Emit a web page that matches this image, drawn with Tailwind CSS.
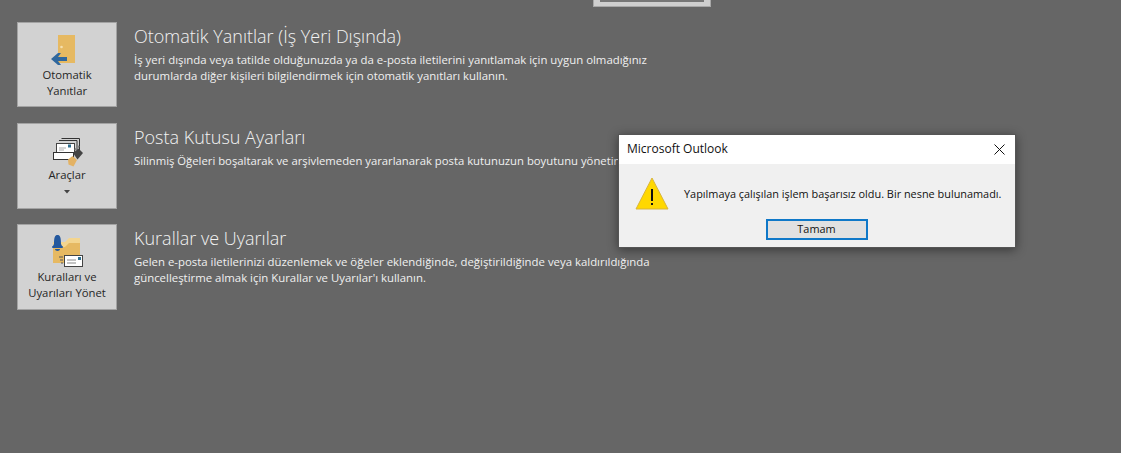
<!DOCTYPE html>
<html><head><meta charset="utf-8"><script src="https://cdn.jsdelivr.net/npm/@tailwindcss/browser@4"></script></head>
<body class="m-0">
<div class="relative w-[1121px] h-[453px] overflow-hidden bg-[#666666] font-['Open_Sans','Noto_Sans',sans-serif]">
  <div class="absolute left-[593px] top-0 w-[118px] h-[7px] bg-[#cfcfcf] border-x border-b border-[#a8a8a8] flex justify-center"><div class="w-[104px] h-[2px] bg-[#777777]"></div></div>

  <div class="flex flex-col pl-[17px] pt-[22px]">
    <div class="flex gap-[17px] mb-[16px]">
      <div class="w-[100px] h-[85px] bg-[#d2d2d2] border border-[#a3a3a3] flex flex-col items-center pt-[12px] text-[11.3px] leading-[16px] text-[#262626] text-center shrink-0">
        <svg width="34" height="30" viewBox="0 0 34 30" class="shrink-0"><rect x="8" y="0" width="17" height="28" fill="#e6b962"/><circle cx="11.500" cy="12" r="1.300" fill="#f5dfaf"/><path d="M1 24 L8 18 H11 L8 22 H17 V26 H8 L11 30 H8 Z" fill="#2f679e"/></svg>
        <span class="mt-[2px]">Otomatik<br>Yanıtlar</span>
      </div>
      <div class="w-[540px] text-[#f3f3f3] pt-[1px]">
        <div class="text-[18px] leading-[26px] font-light whitespace-nowrap">Otomatik Yanıtlar (İş Yeri Dışında)</div>
        <div class="text-[11.4px] leading-[16px] mt-[3px] text-[#f0f0f0] whitespace-nowrap">İş yeri dışında veya tatilde olduğunuzda ya da e-posta iletilerini yanıtlamak için uygun olmadığınız<br>durumlarda diğer kişileri bilgilendirmek için otomatik yanıtları kullanın.</div>
      </div>
    </div>

    <div class="flex gap-[17px] mb-[15px]">
      <div class="w-[100px] h-[86px] bg-[#d2d2d2] border border-[#a3a3a3] flex flex-col items-center pt-[12px] text-[11.3px] leading-[16px] text-[#262626] text-center shrink-0">
        <svg width="34" height="31" viewBox="0 0 34 31" class="shrink-0">
          <path d="M11.500 2.500H29.500V14M9 4.500H27V14" fill="none" stroke="#333" stroke-width="1"/>
          <rect x="6.500" y="7.500" width="18" height="10" fill="#fff" stroke="#444"/>
          <rect x="18" y="8.500" width="3" height="3" fill="#2f6f8f"/><path d="M9 12H16M9 14H14" stroke="#aaa"/>
          <rect x="3.500" y="16.500" width="20" height="7" fill="#fff" stroke="#333"/>
          <path d="M25 14 L29 10" stroke="#888" stroke-width="2"/>
          <path d="M23 17 L28.500 12.500 L33 17 L27.500 23.500 Z" fill="#444"/>
          <path d="M22.500 20 L27 24 L23.500 30.500 L18.500 28.500 L18 23.500 Z" fill="#e3b264"/>
        </svg>
        <span>Araçlar</span>
        <svg width="6" height="4" viewBox="0 0 6 4" class="mt-[7px]"><path d="M0 0H6L3 3.500Z" fill="#444"/></svg>
      </div>
      <div class="w-[540px] text-[#f3f3f3] pt-[1px]">
        <div class="text-[18px] leading-[26px] font-light whitespace-nowrap">Posta Kutusu Ayarları</div>
        <div class="text-[11.3px] leading-[16px] mt-[3px] text-[#f0f0f0] whitespace-nowrap">Silinmiş Öğeleri boşaltarak ve arşivlemeden yararlanarak posta kutunuzun boyutunu yönetin.</div>
      </div>
    </div>

    <div class="flex gap-[17px]">
      <div class="w-[100px] h-[86px] bg-[#d2d2d2] border border-[#a3a3a3] flex flex-col items-center pt-[9px] text-[11.3px] leading-[16px] text-[#262626] text-center shrink-0">
        <svg width="34" height="34" viewBox="0 0 34 34" class="shrink-0">
          <path d="M3 8H15L19 4H30V29H3Z" fill="#f3d58f"/><path d="M3 13H15L19 9H30V29H3Z" fill="#e6b962"/>
          <path d="M4 10 C4 3 5 1 7.500 1 C10 1 11 3 11 10 L12 12 H3 Z" fill="#23589e"/><rect x="2" y="12" width="11" height="2" rx="1" fill="#23589e"/><path d="M5 15H10C10 17.500 5 17.500 5 15Z" fill="#23589e"/>
          <rect x="14.500" y="21.500" width="18" height="11" fill="#fff" stroke="#444"/>
          <rect x="28" y="23" width="3" height="3" fill="#2f6f8f"/><path d="M17 26H26M17 29H26" stroke="#888"/>
          <path d="M9 23H13M10 26H13M11 29H13" stroke="#555"/>
        </svg>
        <span class="mt-[1px]">Kuralları ve<br>Uyarıları Yönet</span>
      </div>
      <div class="w-[540px] text-[#f3f3f3] pt-[1px]">
        <div class="text-[18px] leading-[26px] font-light whitespace-nowrap">Kurallar ve Uyarılar</div>
        <div class="text-[11.4px] leading-[16px] mt-[3px] text-[#f0f0f0] whitespace-nowrap">Gelen e-posta iletilerinizi düzenlemek ve öğeler eklendiğinde, değiştirildiğinde veya kaldırıldığında<br>güncelleştirme almak için Kurallar ve Uyarılar'ı kullanın.</div>
      </div>
    </div>
  </div>

  <div class="absolute left-[618px] top-[134px] w-[398px] h-[114px] bg-[#f0f0f0] border border-[#555] shadow-[0_2px_10px_rgba(0,0,0,0.45)] flex flex-col text-[10.9px] text-[#111]">
    <div class="h-[29px] bg-white flex items-center justify-between pl-[8px] pr-[10px] pb-[1px] shrink-0">
      <span class="text-[12px]">Microsoft Outlook</span>
      <svg width="11" height="11" viewBox="0 0 11 11"><path d="M0.500 0.500L10.500 10.500M10.500 0.500L0.500 10.500" stroke="#111" stroke-width="1"/></svg>
    </div>
    <div class="flex items-center pl-[16px] pt-[14px] gap-[15px]">
      <svg width="34" height="33" viewBox="0 0 34 33" class="shrink-0 -mt-[1px]"><path d="M17 1 L33 32 H1 Z" fill="#ffd800" stroke="#d9b53a" stroke-linejoin="round"/><rect x="16" y="12" width="2" height="12" fill="#111"/><rect x="16" y="26" width="2" height="2" fill="#111"/></svg>
      <span class="whitespace-nowrap">Yapılmaya çalışılan işlem başarısız oldu. Bir nesne bulunamadı.</span>
    </div>
    <div class="flex justify-center pt-[9px] pr-[1px]">
      <div class="w-[102px] h-[21px] bg-[#e1e1e1] border-2 border-[#0f78c8] flex items-center justify-center">Tamam</div>
    </div>
  </div>
</div>
</body></html>
